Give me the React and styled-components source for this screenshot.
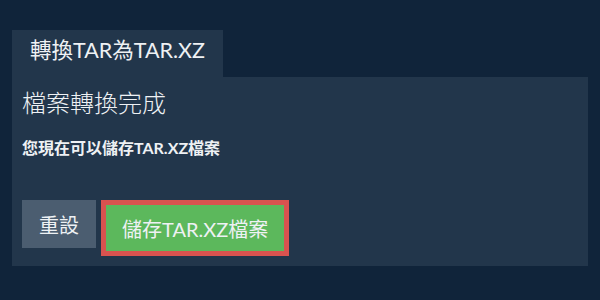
import React from "react";
import styled, { createGlobalStyle } from "styled-components";

const GlobalStyle = createGlobalStyle`
  body {
    margin: 0;
    background: #10243a;
    font-family: Lato, "Noto Sans CJK TC", sans-serif;
    color: #eef1f4;
  }
`;

const Page = styled.div`
  padding: 30px 12px 0;
  height: 300px;
  box-sizing: border-box;
`;

const Tab = styled.div`
  display: inline-block;
  height: 47px;
  line-height: 41px;
  padding: 0 18px;
  background: #22364b;
  font-size: 21.5px;
`;

const Panel = styled.div`
  background: #22364b;
  height: 189px;
  padding: 10px;
  box-sizing: border-box;
  display: flex;
  flex-direction: column;
`;

const Heading = styled.h2`
  margin: 0;
  font-size: 24px;
  font-weight: 300;
  line-height: 32px;
`;

const Note = styled.p`
  margin: 16px 0 0;
  font-size: 16px;
  font-weight: 700;
`;

const Actions = styled.div`
  margin-top: auto;
  display: flex;
  align-items: flex-start;
  gap: 5px;
`;

const Button = styled.button`
  font-family: inherit;
  font-size: 20px;
  color: #eef1f4;
  border: ${(p) => (p.$focused ? "5px solid #d9534f" : "none")};
  background: ${(p) => (p.$primary ? "#5cb85c" : "#4b5d70")};
  height: ${(p) => (p.$focused ? "56px" : "48px")};
  padding: 0 ${(p) => (p.$focused ? "16px" : "17px")};
  cursor: pointer;
`;

export default function App() {
  return (
    <Page>
      <GlobalStyle />
      <Tab>轉換TAR為TAR.XZ</Tab>
      <Panel>
        <Heading>檔案轉換完成</Heading>
        <Note>您現在可以儲存TAR.XZ檔案</Note>
        <Actions>
          <Button>重設</Button>
          <Button $primary $focused>
            儲存TAR.XZ檔案
          </Button>
        </Actions>
      </Panel>
    </Page>
  );
}
